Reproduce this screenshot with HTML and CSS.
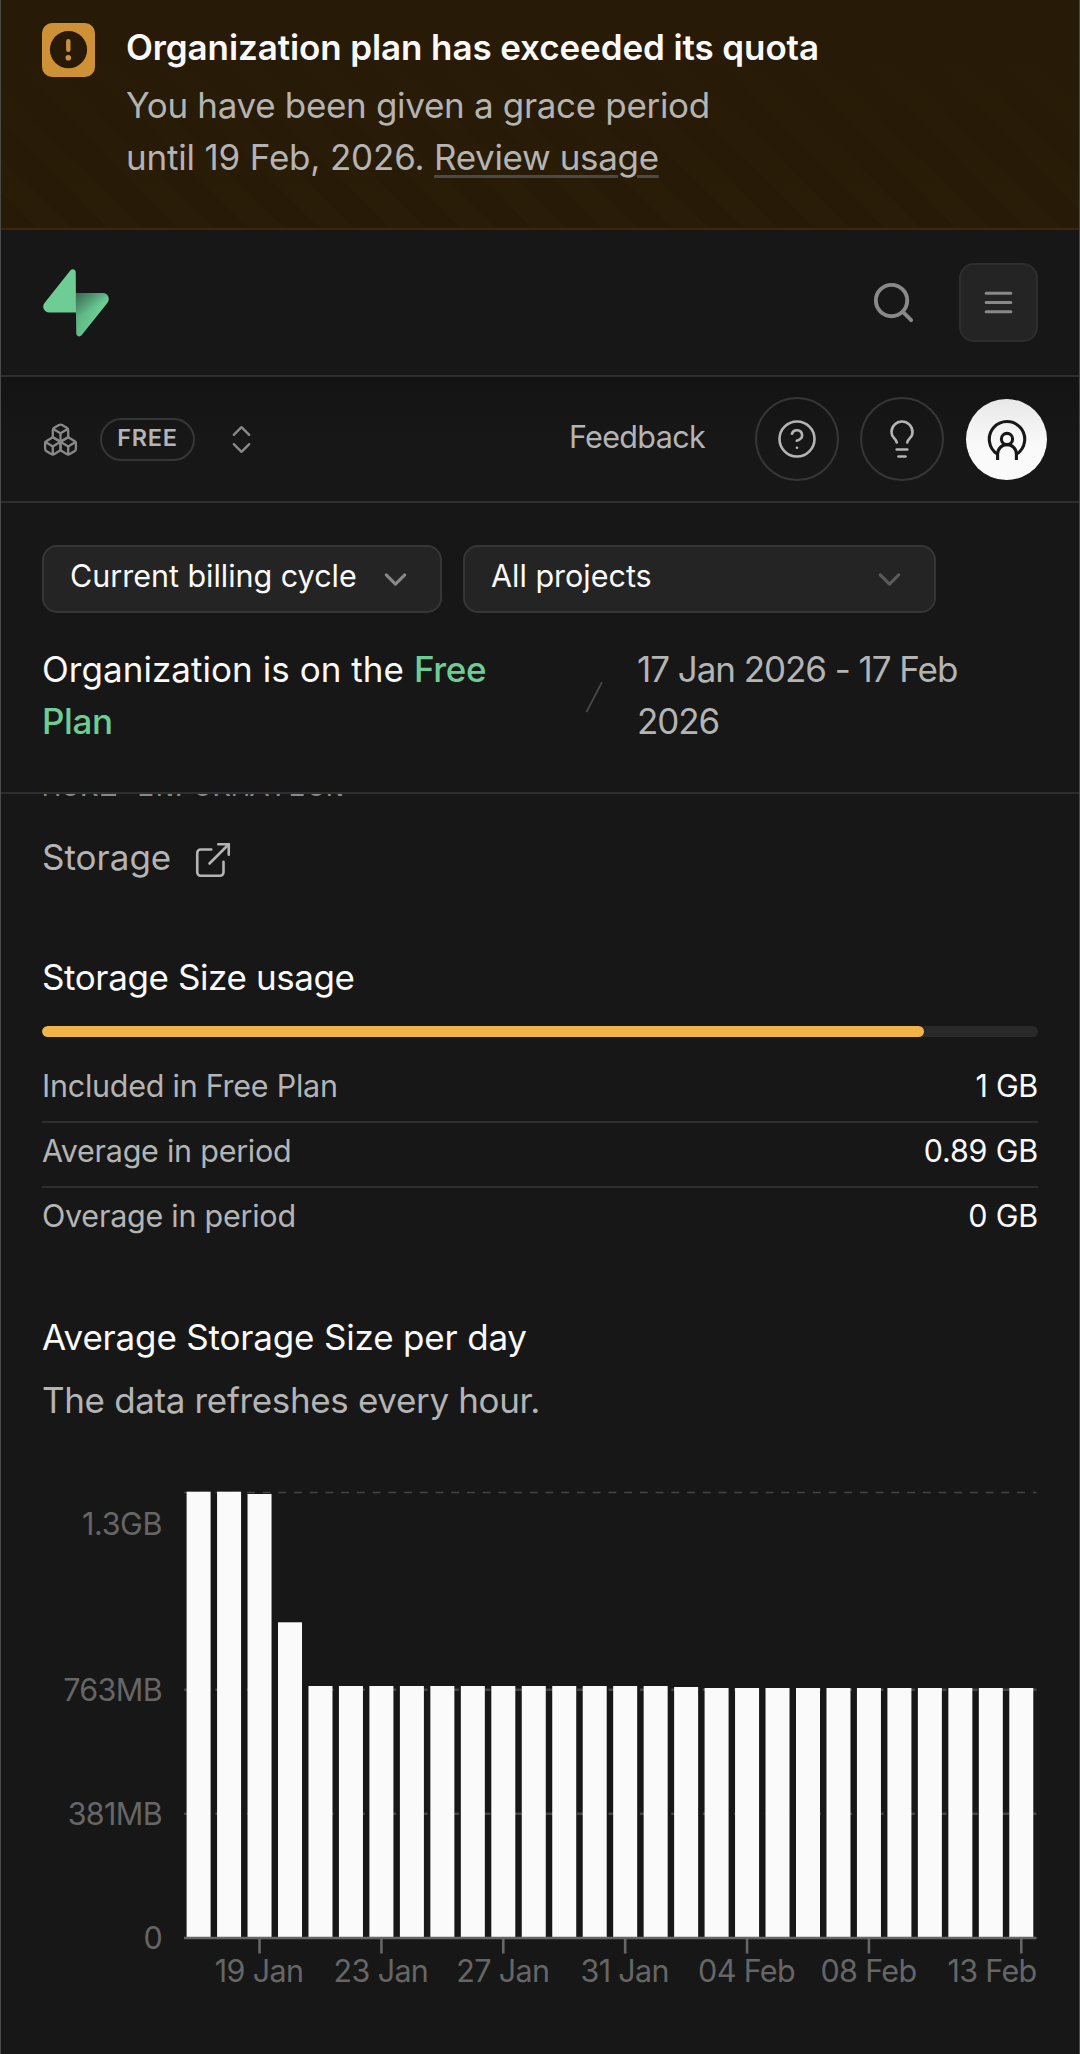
FILE: index.html
```html
<!DOCTYPE html>
<html lang="en">
<head>
<meta charset="utf-8">
<title>Usage</title>
<link rel="stylesheet" href="styles.css">
</head>
<body>
<div class="page">
  <div class="banner">
    <svg class="banner-icon" width="53" height="54" viewBox="0 0 53 54">
      <rect width="53" height="54" rx="10" fill="#ce9136"/>
      <circle cx="26.5" cy="26.7" r="18.6" fill="#271a06"/>
      <path d="M26.3 18.3v8.4" stroke="#ce9136" stroke-width="4.4" stroke-linecap="round"/>
      <circle cx="26.3" cy="34.8" r="2.8" fill="#ce9136"/>
    </svg>
    <div class="banner-body">
      <p class="banner-title">Organization plan has exceeded its quota</p>
      <p class="banner-text">You have been given a grace period</p>
      <p class="banner-text banner-until">until 19 Feb, 2026. <a class="banner-link">Review usage</a></p>
    </div>
  </div>

  <header class="topbar">
    <svg class="logo" width="66" height="68" viewBox="0 0 109 113" fill="none">
      <defs>
        <linearGradient id="lg1" x1="53.974" y1="54.974" x2="94.163" y2="71.829" gradientUnits="userSpaceOnUse">
          <stop stop-color="#57a97a"/><stop offset="1" stop-color="#6dcd95"/>
        </linearGradient>
        <linearGradient id="lg2" x1="40" y1="30.578" x2="66" y2="76" gradientUnits="userSpaceOnUse">
          <stop stop-color="#171717" stop-opacity=".6"/><stop offset="1" stop-color="#171717" stop-opacity="0"/>
        </linearGradient>
      </defs>
      <path d="M63.708 110.284C60.848 113.885 55.05 111.912 54.981 107.314L53.974 40.063L99.194 40.063C107.384 40.063 111.952 49.523 106.859 55.937L63.708 110.284Z" fill="url(#lg1)"/>
      <path d="M63.708 110.284C60.848 113.885 55.05 111.912 54.981 107.314L53.974 40.063L99.194 40.063C107.384 40.063 111.952 49.523 106.859 55.937L63.708 110.284Z" fill="url(#lg2)"/>
      <path d="M45.317 2.071C48.177 -1.53 53.975 .443 54.043 5.041L54.485 72.292H9.831C1.64 72.292 -2.928 62.832 2.166 56.418L45.317 2.071Z" fill="#6dcd95"/>
    </svg>
    <div class="topbar-actions">
      <svg class="icon" width="47" height="47" viewBox="0 0 24 24" stroke-width="2"><circle cx="11" cy="11" r="8"/><path d="m21 21-4.3-4.3"/></svg>
      <button class="menu-btn">
        <svg class="icon" width="37" height="37" viewBox="0 0 24 24" stroke-width="2"><path d="M4 6h16M4 12h16M4 18h16"/></svg>
      </button>
    </div>
  </header>

  <div class="orgbar">
    <div class="org">
      <svg class="icon" width="37" height="37" viewBox="0 0 24 24" stroke-width="1.5"><path d="M2.97 12.92A2 2 0 0 0 2 14.63v3.24a2 2 0 0 0 .97 1.71l3 1.8a2 2 0 0 0 2.06 0L12 19v-5.5l-5-3-4.03 2.42Z"/><path d="m7 16.5-4.74-2.85"/><path d="m7 16.5 5-3"/><path d="M7 16.5v5.17"/><path d="M12 13.5V19l3.97 2.38a2 2 0 0 0 2.06 0l3-1.8a2 2 0 0 0 .97-1.71v-3.24a2 2 0 0 0-.97-1.71L17 10.5l-5 3Z"/><path d="m17 16.5-5-3"/><path d="m17 16.5 4.74-2.85"/><path d="M17 16.5v5.17"/><path d="M7.97 4.42A2 2 0 0 0 7 6.13v4.37l5 3 5-3V6.13a2 2 0 0 0-.97-1.71l-3-1.8a2 2 0 0 0-2.06 0l-3 1.8Z"/><path d="M12 8 7.26 5.15"/><path d="m12 8 4.74-2.85"/><path d="M12 13.5V8"/></svg>
      <span class="plan-badge">FREE</span>
      <svg class="icon switcher" width="37" height="37" viewBox="0 0 24 24" stroke-width="1.5"><path d="m7 15 5 5 5-5"/><path d="m7 9 5-5 5 5"/></svg>
    </div>
    <div class="org-actions">
      <span class="feedback">Feedback</span>
      <button class="round-btn">
        <svg class="icon icon-light" width="42" height="42" viewBox="0 0 24 24" stroke-width="1.5"><circle cx="12" cy="12" r="10"/><path d="M9.09 9a3 3 0 0 1 5.83 1c0 2-3 3-3 3"/><path d="M12 17h.01"/></svg>
      </button>
      <button class="round-btn">
        <svg class="icon icon-light" width="42" height="42" viewBox="0 0 24 24" stroke-width="1.5"><path d="M15 14c.2-1 .7-1.7 1.5-2.5 1-.9 1.5-2.2 1.5-3.5A6 6 0 0 0 6 8c0 1 .2 2.2 1.5 3.5.7.7 1.3 1.5 1.5 2.5"/><path d="M9 18h6"/><path d="M10 22h4"/></svg>
      </button>
      <button class="avatar">
        <svg width="42" height="42" viewBox="0 0 42 42" fill="none" stroke="#171717" stroke-width="3.1" stroke-linecap="butt">
          <circle cx="21" cy="21" r="5.6"/>
          <path d="M11.6 42.5V36a9.4 9.4 0 0 1 18.8 0v6.500"/>
          <path d="M11.200 36A17.700 17.700 0 1 1 30.800 36"/>
        </svg>
      </button>
    </div>
  </div>

  <section class="filters">
    <div class="selects">
      <div class="select select-cycle"><span class="t-cycle">Current billing cycle</span>
        <svg class="icon" width="37" height="37" viewBox="0 0 24 24" stroke-width="2"><path d="m6 9 6 6 6-6"/></svg></div>
      <div class="select select-project"><span>All projects</span>
        <svg class="icon icon-dim" width="37" height="37" viewBox="0 0 24 24" stroke-width="2"><path d="m6 9 6 6 6-6"/></svg></div>
    </div>
    <div class="plan-row">
      <p class="plan-text">Organization is on the <span class="plan-name">Free Plan</span></p>
      <svg class="slash" width="42" height="42" viewBox="0 0 24 24"><path d="M16 3.549 7.12 20.6"/></svg>
      <p class="period">17 Jan 2026 - 17 Feb<br>2026</p>
    </div>
  </section>

  <main class="content">
    <p class="more-info">MORE INFORMATION</p>
    <a class="doc-link">Storage
      <svg class="icon icon-light" width="42" height="42" viewBox="0 0 24 24" stroke-width="1.5"><path d="M15 3h6v6"/><path d="M10 14 21 3"/><path d="M18 13v6a2 2 0 0 1-2 2H5a2 2 0 0 1-2-2V8a2 2 0 0 1 2-2h6"/></svg>
    </a>

    <h2 class="heading usage-heading">Storage Size usage</h2>
    <div class="meter"><div class="meter-fill" style="width:88.6%"></div></div>
    <dl class="stats">
      <div class="stat"><dt>Included in Free Plan</dt><dd class="v-one">1 GB</dd></div>
      <div class="stat"><dt>Average in period</dt><dd>0.89 GB</dd></div>
      <div class="stat"><dt>Overage in period</dt><dd>0 GB</dd></div>
    </dl>

    <h2 class="heading daily-heading">Average Storage Size per day</h2>
    <p class="note">The data refreshes every hour.</p>

    <svg class="chart" width="996" height="560" viewBox="42 1466 996 560">
      <g class="grid">
        <path d="M184 1492.500H1036.500" stroke-width="1.300"/>
        <path d="M184 1689.700H1036.500M184 1813.700H1036.500" stroke-width="2.600"/>
      </g>
      <g id="bars" class="bars"></g>
      <path class="axis" d="M184 1938H1036.500"/>
      <g class="ylabels">
        <text x="162" y="1534.500" class="tight-1">1.3GB</text>
        <text x="162" y="1700.500" class="tight-2">763MB</text>
        <text x="162" y="1824.500" class="tight-2">381MB</text>
        <text x="162" y="1948.500">0</text>
      </g>
      <g id="xlabels" class="xlabels"></g>
    </svg>
  </main>
</div>
<script src="chart.js"></script>
</body>
</html>
```
FILE: styles.css
```css
* { box-sizing: border-box; margin: 0; padding: 0; }

body {
  background: #171717;
  color: #fafafa;
  font-family: Inter, "Liberation Sans", sans-serif;
  font-size: 35px;
  line-height: 52px;
}

.page {
  width: 1080px;
  height: 2054px;
  overflow: hidden;
  border: solid #4a4a4a;
  border-width: 0 1px;
  display: flex;
  flex-direction: column;
}

.icon {
  fill: none;
  stroke: #898989;
  stroke-linecap: round;
  stroke-linejoin: round;
  flex: none;
  display: block;
}
.icon-light { stroke: #b4b4b4; }
.icon-dim { stroke: #5a5a5a; }

button { border: 0; background: none; display: flex; align-items: center; justify-content: center; }

/* quota banner */
.banner {
  height: 230px;
  flex: none;
  padding: 21px 41px 0;
  display: flex;
  gap: 31px;
  border-bottom: 2px solid #3d260c;
  background:
    linear-gradient(#271a06 15%, rgba(39, 26, 6, 0)),
    repeating-linear-gradient(45deg, #271a06 0 25px, #2a1d08 25px 50px);
}
.banner-icon { margin-top: 2px; flex: none; }
.banner-title { font-weight: 600; letter-spacing: -0.1px; margin-bottom: 6px; }
.banner-text { color: #b4b4b4; letter-spacing: -0.32px; }
.banner-until { letter-spacing: -0.18px; }
.banner-link {
  letter-spacing: -0.35px;
  text-decoration: underline;
  text-decoration-color: #4a4a47;
  text-decoration-thickness: 3px;
  text-underline-offset: 5px;
}

/* top bar */
.topbar {
  height: 147px;
  flex: none;
  padding: 0 41px 0 42px;
  display: flex;
  align-items: center;
  justify-content: space-between;
  border-bottom: 2px solid #2e2e2e;
}
.topbar-actions { display: flex; align-items: center; gap: 42px; }
.menu-btn {
  width: 79px;
  height: 79px;
  background: #242424;
  border: 2px solid #2e2e2e;
  border-radius: 15px;
}

/* organization bar */
.orgbar {
  height: 126px;
  flex: none;
  padding: 0 32px 0 41px;
  display: flex;
  align-items: center;
  justify-content: space-between;
  border-bottom: 2px solid #2e2e2e;
  background: linear-gradient(#131313, #171717 60px);
}
.org, .org-actions { display: flex; align-items: center; }
.plan-badge {
  width: 95px;
  height: 43px;
  margin-left: 21px;
  border: 2px solid #363636;
  border-radius: 22px;
  color: #b4b4b4;
  font-size: 23.5px;
  font-weight: 600;
  line-height: 35px;
  letter-spacing: 0.7px;
  text-align: center;
}
.switcher { margin-left: 28px; }
.feedback {
  color: #b4b4b4;
  font-size: 30.5px;
  letter-spacing: -0.65px;
  margin: -5px 50px 0 0;
}
.round-btn {
  width: 84px;
  height: 84px;
  border: 2px solid #363636;
  border-radius: 50%;
  margin-right: 21px;
}
.round-btn + .avatar { margin-left: 1px; }
.avatar {
  width: 81px;
  height: 81px;
  border-radius: 50%;
  background: linear-gradient(#e8e8e8, #fafafa 60%);
}

/* filters */
.filters {
  height: 291px;
  flex: none;
  padding: 42px 41px 0;
  border-bottom: 2px solid #2e2e2e;
}
.selects { display: flex; gap: 21px; }
.select {
  height: 68px;
  padding: 0 26px;
  display: flex;
  align-items: center;
  justify-content: space-between;
  font-size: 30.5px;
  line-height: 60px;
  background: #242424;
  border: 2px solid #363636;
  border-radius: 15px;
}
.select span { margin-top: -6px; }
.select-cycle { width: 400px; }
.select-project { width: 473px; }
.t-cycle { letter-spacing: -0.02px; }
.plan-row {
  margin-top: 30px;
  display: flex;
  align-items: center;
  gap: 21px;
}
.plan-text { width: 511px; letter-spacing: 0.05px; }
.plan-name { color: #6dcd95; font-weight: 500; letter-spacing: -0.35px; }
.slash { flex: none; margin-top: 3px; fill: none; stroke: #4a4a4a; stroke-width: 1; }
.period { color: #b4b4b4; letter-spacing: -1.05px; }

/* scrolled content */
.content { flex: 1; overflow: hidden; padding: 0 41px; }
.more-info {
  margin-top: -27px;
  font: 31.5px/42px "Liberation Mono", monospace;
  color: #898989;
}
.doc-link {
  margin-top: 22px;
  height: 52px;
  display: flex;
  gap: 21px;
  color: #b4b4b4;
}
.doc-link svg { margin-top: 8px; }
.heading { font-size: 35px; font-weight: 400; }
.usage-heading { margin-top: 68px; letter-spacing: -0.4px; }
.meter { height: 11px; margin: 23px 0 21px; border-radius: 6px; background: #292929; overflow: hidden; }
.meter-fill { height: 100%; border-radius: 6px; background: #f3b447; }
.stat {
  height: 65px;
  padding: 7px 0 14px;
  display: flex;
  justify-content: space-between;
  font-size: 30.5px;
  line-height: 42px;
  border-bottom: 2px solid #2e2e2e;
}
.stat:last-child { border-bottom-color: transparent; }
.stat dt { color: #b4b4b4; letter-spacing: -0.25px; }
.stat dd { letter-spacing: -0.2px; }
.stat .v-one { letter-spacing: -0.3px; }
.daily-heading { margin-top: 58px; letter-spacing: -0.18px; }
.note { margin-top: 11px; color: #b4b4b4; letter-spacing: -0.35px; }

/* chart */
.chart { display: block; margin-top: 40px; font-size: 30.5px; }
.grid path { stroke: #444; stroke-dasharray: 7.86 7.86; }
.bars rect { fill: #fafafa; }
.axis, .xlabels path { stroke: #666; stroke-width: 2.6; }
.chart text { fill: #666; letter-spacing: -0.65px; }
.chart .tight-1 { letter-spacing: -0.4px; }
.ylabels { text-anchor: end; }
.xlabels { text-anchor: middle; }
```
FILE: chart.js
```js
const NS = 'http://www.w3.org/2000/svg';
const BASE = 1938, LEFT = 186.6, STEP = 30.47, BAR = 24;
const heights = [446.3, 446.3, 444, 315.700, ...Array(12).fill(252), 251, ...Array(11).fill(250)];
const labels = { 2: '19 Jan', 6: '23 Jan', 10: '27 Jan', 14: '31 Jan', 18: '04 Feb', 22: '08 Feb', 27: '13 Feb' };

function add(parent, name, attrs, text) {
  const el = document.createElementNS(NS, name);
  for (const key in attrs) el.setAttribute(key, attrs[key]);
  if (text) el.textContent = text;
  parent.appendChild(el);
}

const bars = document.getElementById('bars');
const xlabels = document.getElementById('xlabels');
heights.forEach((h, i) => {
  const x = LEFT + i * STEP;
  add(bars, 'rect', { x: x, y: BASE - h, width: BAR, height: h });
  if (labels[i]) {
    const mid = x + BAR / 2;
    add(xlabels, 'path', { d: `M${mid} ${BASE}v15.500` });
    add(xlabels, 'text', { x: Math.min(mid - 0.5, 992), y: 1981.5 }, labels[i]);
  }
});
```
